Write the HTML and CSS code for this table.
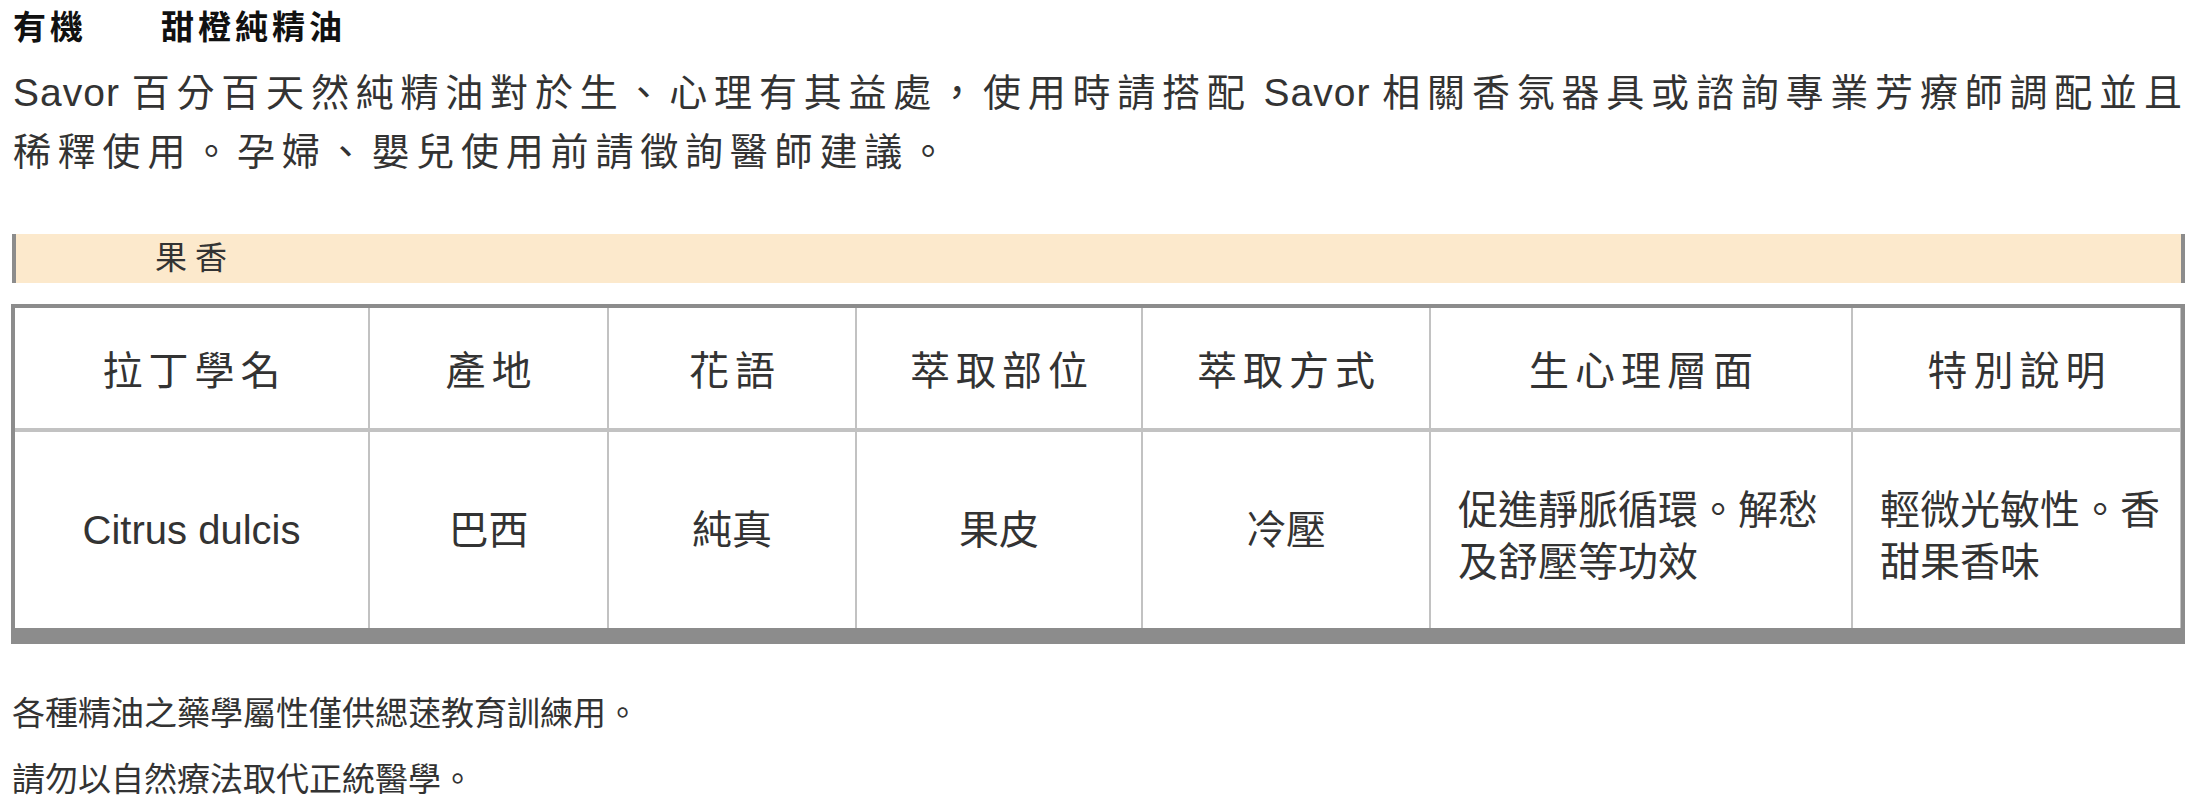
FILE: index.html
```html
<!DOCTYPE html>
<html lang="zh-Hant">
<head>
<meta charset="utf-8">
<title>有機 甜橙純精油</title>
<link rel="stylesheet" href="styles.css">
</head>
<body>
<div class="page">
  <h1 class="title">有機　　甜橙純精油</h1>
  <p class="intro"><span class="en">Savor </span>百分百天然純精油對於生、心理有其益處，使用時請搭配<span class="en"> Savor </span>相關香氛器具或諮詢專業芳療師調配並且稀釋使用。孕婦、嬰兒使用前請徵詢醫師建議。</p>
  <div class="band">果香</div>
  <div class="sheet">
    <div class="th">拉丁學名</div>
    <div class="th">產地</div>
    <div class="th">花語</div>
    <div class="th">萃取部位</div>
    <div class="th">萃取方式</div>
    <div class="th">生心理層面</div>
    <div class="th">特別說明</div>
    <div class="td">Citrus dulcis</div>
    <div class="td">巴西</div>
    <div class="td">純真</div>
    <div class="td">果皮</div>
    <div class="td">冷壓</div>
    <div class="td left">促進靜脈循環。解愁及舒壓等功效</div>
    <div class="td left">輕微光敏性。香甜果香味</div>
  </div>
  <p class="note first">各種精油之藥學屬性僅供緦蒁教育訓練用。</p>
  <p class="note">請勿以自然療法取代正統醫學。</p>
</div>
</body>
</html>
```

FILE: styles.css
```css
html, body {
  margin: 0;
  padding: 0;
  background: #ffffff;
}

body {
  font-family: "Liberation Sans", "Noto Sans CJK TC", sans-serif;
  color: #333333;
}

.page {
  width: 2173px;
  padding: 6px 0 0 12px;
}

.title {
  margin: 0;
  font-size: 33px;
  font-weight: 700;
  line-height: 44px;
  letter-spacing: 4px;
  color: #111111;
  padding-left: 1px;
}

.intro {
  margin: 13px -14px 0 1px;
  font-size: 38px;
  line-height: 59px;
  letter-spacing: 6.8px;
  color: #333333;
}

.intro .en {
  font-size: 39px;
  letter-spacing: 1px;
}

.band {
  margin-top: 52px;
  height: 49px;
  line-height: 49px;
  background: #fce9cc;
  border-left: 4px solid #8c8c8c;
  border-right: 4px solid #8c8c8c;
  padding-left: 139px;
  font-size: 32px;
  letter-spacing: 8px;
  color: #333333;
}

.sheet {
  margin: 21px 0 0 -1px;
  display: grid;
  grid-template-columns: 353px 237px 246px 284px 286px 420px 327px;
  grid-template-rows: 120px 196px;
  column-gap: 2px;
  row-gap: 4px;
  background: #c2c2c2;
  border: 4px solid #8c8c8c;
  border-bottom-width: 16px;
}

.th, .td {
  background: #ffffff;
  display: flex;
  align-items: center;
  justify-content: center;
  text-align: center;
  color: #333333;
}

.th {
  font-size: 40px;
  letter-spacing: 6px;
  padding-left: 6px;
}

.td {
  font-size: 40px;
  line-height: 52px;
}

.td.left {
  justify-content: flex-start;
  text-align: left;
  padding: 12px 16px 0 27px;
}

.note {
  margin: 22px 0 0 0;
  font-size: 33px;
  line-height: 44px;
  color: #333333;
}

.note.first {
  margin-top: 48px;
}
```
